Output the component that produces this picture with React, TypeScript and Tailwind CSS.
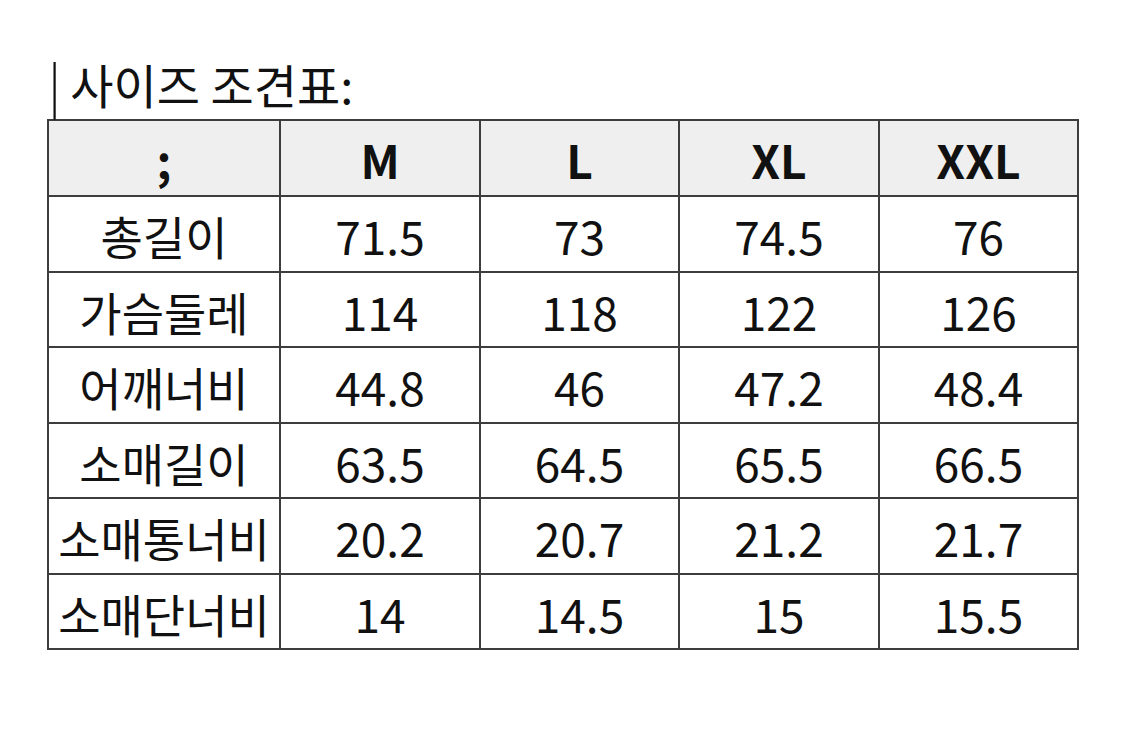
import React from "react";

const rows: [string, string, string, string, string][] = [
  ["총길이", "71.5", "73", "74.5", "76"],
  ["가슴둘레", "114", "118", "122", "126"],
  ["어깨너비", "44.8", "46", "47.2", "48.4"],
  ["소매길이", "63.5", "64.5", "65.5", "66.5"],
  ["소매통너비", "20.2", "20.7", "21.2", "21.7"],
  ["소매단너비", "14", "14.5", "15", "15.5"],
];

const widths = ["w-[232px]", "w-[200px]", "w-[199px]", "w-[200px]", "w-[199px]"];

export default function App() {
  return (
    <div
      className="w-[1125px] h-[745px] bg-white text-[#111] pl-[47px] pt-[58px]"
      style={{ fontFamily: '"Noto Sans CJK KR", "Noto Sans", sans-serif' }}
    >
      <div className="text-[47px] font-normal h-[61px] flex items-start">
        <span className="text-[52px] font-light leading-[52px] ml-[1px] mr-[9px] -translate-y-[1px]">|</span>
        <span className="leading-[56px] -translate-y-[2px]">사이즈 조견표:</span>
      </div>
      <table className="border-collapse border-2 border-[#3d3d3d] text-[46px] font-normal">
        <thead>
          <tr className="bg-[#efefef] h-[76px]">
            {[";", "M", "L", "XL", "XXL"].map((h, i) => (
              <th
                key={i}
                className={`${widths[i]} border-2 border-[#3d3d3d] text-center font-bold p-0 pt-[2px] leading-none`}
              >
                {h}
              </th>
            ))}
          </tr>
        </thead>
        <tbody>
          {rows.map((r, ri) => (
            <tr key={ri} className="h-[75.5px]">
              {r.map((c, ci) => (
                <td
                  key={ci}
                  className={`${widths[ci]} border-2 border-[#3d3d3d] text-center p-0 pt-[3px] leading-none whitespace-nowrap`}
                >
                  {c}
                </td>
              ))}
            </tr>
          ))}
        </tbody>
      </table>
    </div>
  );
}
